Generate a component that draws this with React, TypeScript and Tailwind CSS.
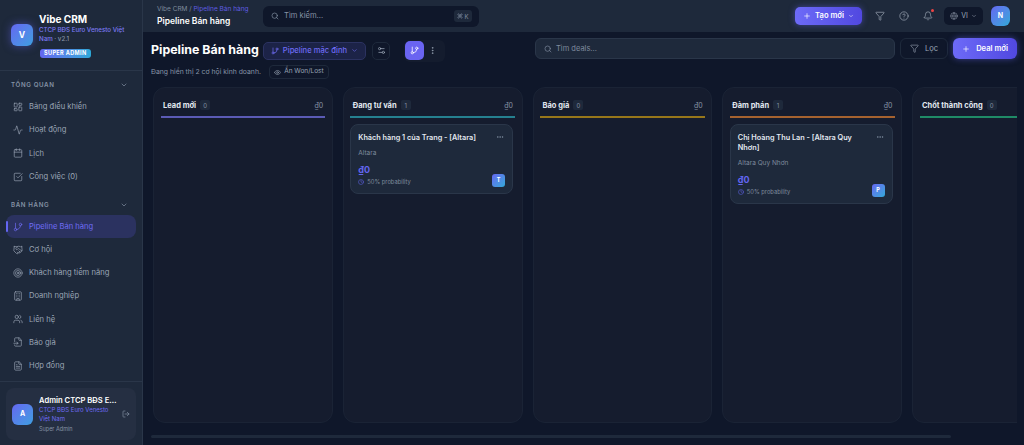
import {
  Bell,
  Building,
  Calendar,
  ChevronDown,
  CircleHelp,
  Clock,
  Ellipsis,
  EllipsisVertical,
  Eye,
  FileInput,
  FileText,
  Filter,
  GitBranch,
  Globe,
  Handshake,
  LayoutDashboard,
  LogOut,
  Plus,
  Search,
  Settings2,
  SquareCheckBig,
  Target,
  Users,
  Activity,
  Command,
} from "lucide-react";

const font = { fontFamily: "Inter, 'Noto Sans', sans-serif" };

const overview = [
  { label: "Bảng điều khiển", Icon: LayoutDashboard },
  { label: "Hoạt động", Icon: Activity },
  { label: "Lịch", Icon: Calendar },
  { label: "Công việc (0)", Icon: SquareCheckBig },
];

const sales = [
  { label: "Pipeline Bán hàng", Icon: GitBranch, active: true },
  { label: "Cơ hội", Icon: Handshake },
  { label: "Khách hàng tiềm năng", Icon: Target },
  { label: "Doanh nghiệp", Icon: Building },
  { label: "Liên hệ", Icon: Users },
  { label: "Báo giá", Icon: FileInput },
  { label: "Hợp đồng", Icon: FileText },
];

const stages = [
  {
    name: "Lead mới",
    count: 0,
    bar: "bg-[#5b5bb5]",
    deal: null,
  },
  {
    name: "Đang tư vấn",
    count: 1,
    bar: "bg-[#25808f]",
    deal: { title: "Khách hàng 1 của Trang - [Altara]", company: "Altara", avatar: "T" },
  },
  {
    name: "Báo giá",
    count: 0,
    bar: "bg-[#96761a]",
    deal: null,
  },
  {
    name: "Đàm phán",
    count: 1,
    bar: "bg-[#a5622f]",
    deal: { title: "Chị Hoàng Thu Lan - [Altara Quy Nhơn]", company: "Altara Quy Nhơn", avatar: "P" },
  },
  {
    name: "Chốt thành công",
    count: 0,
    bar: "bg-[#1f8a66]",
    deal: null,
  },
];

function NavItem({ label, Icon, active }: { label: string; Icon: typeof Plus; active?: boolean }) {
  return (
    <div
      className={`relative flex h-[23.2px] items-center gap-[6px] rounded-lg pl-[7px] text-[7.6px] ${
        active ? "bg-[#2b3260] text-[#6f6cf5]" : "text-[#9aa5b5]"
      }`}
    >
      {active && <span className="absolute left-0 top-[6px] h-[11px] w-[2px] rounded bg-[#6366f1]" />}
      <Icon size={10} strokeWidth={1.6} />
      <span>{label}</span>
    </div>
  );
}

function Section({ title, children }: { title: string; children: React.ReactNode }) {
  return (
    <div>
      <div className="flex h-[14px] items-center justify-between pl-[11px] pr-[14px] text-[6.2px] font-semibold tracking-[0.1em] text-[#8592a5]">
        <span>{title}</span>
        <ChevronDown size={8} />
      </div>
      <div className="mt-[3.4px] flex flex-col px-[6px]">{children}</div>
    </div>
  );
}

function Sidebar() {
  return (
    <aside className="flex h-[445px] w-[143px] shrink-0 flex-col border-r border-[#2a3649] bg-[#1e293b]">
      <div className="flex h-[71px] shrink-0 items-center gap-[6px] border-b border-[#2a3649] pl-[11px]">
        <div className="flex h-[22px] w-[22px] shrink-0 items-center justify-center rounded-md bg-gradient-to-br from-[#6366f1] to-[#3b9ee0] text-[8.5px] font-bold text-white shadow-[0_0_8px_rgba(99,102,241,0.5)]">
          V
        </div>
        <div className="w-[90px]">
          <div className="text-[10px] font-bold leading-[14px] text-white">Vibe CRM</div>
          <div className="text-[6.2px] font-medium leading-[8.5px] text-[#7d7bf5]">
            CTCP BĐS Euro Venesto Việt
            <br />
            Nam <span className="text-[#8592a5]">· v2.1</span>
          </div>
          <div className="ml-[1px] mt-[5.5px] w-fit rounded-[3px] bg-gradient-to-r from-[#6366f1] to-[#2ca8d8] px-[4px] text-[5.5px] font-bold leading-[9px] tracking-[0.07em] text-white">
            SUPER ADMIN
          </div>
        </div>
      </div>
      <div className="mt-[7px] flex-1">
        <Section title="TỔNG QUAN">
          {overview.map((item) => (
            <NavItem key={item.label} {...item} />
          ))}
        </Section>
        <div className="mt-[9.4px]">
          <Section title="BÁN HÀNG">
            {sales.map((item) => (
              <NavItem key={item.label} {...item} />
            ))}
          </Section>
        </div>
      </div>
      <div className="h-[64px] shrink-0 border-t border-[#2a3649] px-[6px] pt-[6px]">
        <div className="flex h-[52px] items-center gap-[6px] rounded-lg bg-[#252f42] pl-[6px]">
          <div className="flex h-[21px] w-[21px] shrink-0 items-center justify-center rounded-md bg-gradient-to-br from-[#6366f1] to-[#3b9ee0] text-[7px] font-bold text-white">
            A
          </div>
          <div className="w-[80px] shrink-0">
            <div className="truncate text-[7.6px] font-semibold leading-[11px] text-white">Admin CTCP BĐS Euro Venesto</div>
            <div className="text-[6px] leading-[8.5px] text-[#6f6cf5]">CTCP BĐS Euro Venesto Việt Nam</div>
            <div className="mt-[2px] text-[5.5px] leading-[8px] text-[#8592a5]">Super Admin</div>
          </div>
          <LogOut size={8} className="-ml-[3px] text-[#8592a5]" />
        </div>
      </div>
    </aside>
  );
}

function Header() {
  return (
    <header className="flex h-[32px] shrink-0 items-center bg-[#1e293b] pl-[14px] pr-[14px]">
      <div className="w-[106px]">
        <div className="text-[6.5px] leading-[9px] text-[#7f8b9e]">
          Vibe CRM / <span className="text-[#5f5ce0]">Pipeline Bán hàng</span>
        </div>
        <div className="mt-[2px] text-[8.5px] font-semibold leading-[11px] text-white">Pipeline Bán hàng</div>
      </div>
      <div className="flex h-[21px] w-[216px] items-center rounded-md bg-[#0f172a] pl-[8px] pr-[7px] text-[7.6px] text-[#8592a5]">
        <Search size={8} />
        <span className="ml-[5px] flex-1">Tìm kiếm...</span>
        <span className="flex h-[12px] w-[18px] items-center justify-center gap-[1px] rounded-[3px] bg-[#1e293b] text-[6px]">
          <Command size={6} />K
        </span>
      </div>
      <div className="ml-auto flex items-center">
        <button className="flex h-[18px] w-[67px] items-center justify-center gap-[4px] rounded-[5px] bg-gradient-to-r from-[#6d6af8] to-[#5148e0] text-[7.6px] font-semibold text-white shadow-[0_0_6px_rgba(99,102,241,0.5)]">
          <Plus size={8} />
          Tạo mới
          <ChevronDown size={6} />
        </button>
        <Filter size={10} strokeWidth={1.6} className="ml-[13px] text-[#a3adbb]" />
        <CircleHelp size={10} strokeWidth={1.6} className="ml-[14px] text-[#a3adbb]" />
        <span className="relative ml-[14px]">
          <Bell size={10} strokeWidth={1.6} className="text-[#a3adbb]" />
          <span className="absolute -right-[1px] -top-[2px] h-[3px] w-[3px] rounded-full bg-[#ef4444]" />
        </span>
        <div className="ml-[11px] flex h-[18px] w-[39px] items-center justify-center gap-[3px] rounded-[5px] bg-[#0f172a] text-[7px] text-[#9aa5b5]">
          <Globe size={8} strokeWidth={1.5} />
          VI
          <ChevronDown size={6} />
        </div>
        <div className="ml-[8px] flex h-[20px] w-[19px] items-center justify-center rounded-md bg-gradient-to-br from-[#6366f1] to-[#2ca8d8] text-[7px] font-bold text-white">
          N
        </div>
      </div>
    </header>
  );
}

function Toolbar() {
  return (
    <div className="flex h-[55px] shrink-0 items-start pl-[8px] pr-[7px] pt-[6px]">
      <div className="mt-[2px]">
        <div className="flex h-[21px] items-center">
          <h1 className="w-[107px] whitespace-nowrap text-[12.4px] font-bold text-white">Pipeline Bán hàng</h1>
          <div className="ml-[5px] flex h-[18px] w-[103px] items-center justify-center gap-[4px] rounded-[5px] border border-[#2b3260] bg-[#1c2347] text-[7.6px] font-medium text-[#6f6cf5]">
            <GitBranch size={8} />
            Pipeline mặc định
            <ChevronDown size={7} />
          </div>
          <div className="ml-[6px] flex h-[18px] w-[18px] items-center justify-center rounded-[5px] border border-[#1e293b]">
            <Settings2 size={9} className="text-[#9aa5b5]" />
          </div>
          <div className="ml-[14px] flex h-[22px] w-[41px] items-center rounded-[6px] bg-[#141c2e] pl-[1px]">
            <div className="flex h-[19px] w-[19px] items-center justify-center rounded-[5px] bg-[#6a64f1]">
              <GitBranch size={9} className="text-white" />
            </div>
            <EllipsisVertical size={9} className="ml-[4px] text-[#9aa5b5]" />
          </div>
        </div>
        <div className="mt-[4px] flex h-[14px] items-center">
          <span className="text-[6.85px] text-[#8592a5]">Đang hiển thị 2 cơ hội kinh doanh.</span>
          <div className="ml-[8px] flex h-[14px] w-[60px] items-center justify-center gap-[3px] rounded-[4px] border border-[#1e293b] text-[6.5px] text-[#9aa5b5]">
            <Eye size={7} />
            Ẩn Won/Lost
          </div>
        </div>
      </div>
      <div className="ml-auto flex items-center">
        <div className="flex h-[21px] w-[360px] items-center rounded-md border border-[#2a3649] bg-[#1e293b] pl-[8px] text-[7.5px] text-[#7f8b9e]">
          <Search size={8} />
          <span className="ml-[4px]">Tìm deals...</span>
        </div>
        <div className="ml-[5px] flex h-[21px] w-[48px] items-center justify-center gap-[6px] rounded-md border border-[#1e293b] text-[7.6px] text-[#9aa5b5]">
          <Filter size={9} strokeWidth={1.6} />
          Lọc
        </div>
        <button className="ml-[5px] flex h-[21px] w-[64px] items-center justify-center gap-[6px] rounded-md bg-gradient-to-r from-[#6d6af8] to-[#5148e0] text-[7.6px] font-semibold text-white shadow-[0_0_6px_rgba(99,102,241,0.5)]">
          <Plus size={8} />
          Deal mới
        </button>
      </div>
    </div>
  );
}

function DealCard({ title, company, avatar }: { title: string; company: string; avatar: string }) {
  return (
    <div className="relative rounded-lg border border-[#2a3649] bg-[#1e293b] pb-[7px] pl-[7px] pr-[8px] pt-[8px]">
      <Ellipsis size={8} className="absolute right-[8px] top-[8px] text-[#8592a5]" />
      <div className="pr-[14px] text-[7.3px] font-semibold leading-[10px] text-[#e2e8f0]">{title}</div>
      <div className="mt-[6px] text-[6.5px] leading-[9px] text-[#7f8b9e]">{company}</div>
      <div className="mt-[6px] text-[9px] font-bold leading-[12px] text-[#6366f1]">₫0</div>
      <div className="mt-[1px] flex items-center gap-[3px] text-[5.8px] leading-[9px] text-[#7f8b9e]">
        <Clock size={6} className="text-[#6366f1]" />
        50% probability
      </div>
      <div className="absolute bottom-[6px] right-[7px] flex h-[13px] w-[13px] items-center justify-center rounded-[3px] bg-gradient-to-br from-[#6366f1] to-[#2ca8d8] text-[5.5px] font-bold text-white">
        {avatar}
      </div>
    </div>
  );
}

function Column({ stage }: { stage: (typeof stages)[number] }) {
  return (
    <div className="h-[336px] w-[179.75px] shrink-0 rounded-xl border border-[#1a2335] bg-[#151c2e] pl-[6.5px] pr-[6.5px]">
      <div className="flex h-[24px] items-end justify-between pb-[1px] pl-[2.5px] pr-[2px]">
        <div className="flex items-center gap-[4px]">
          <span className="text-[7.5px] font-bold text-[#e2e8f0]">{stage.name}</span>
          <span className="flex h-[10px] min-w-[10px] items-center justify-center rounded-[2px] bg-[#1e293b] px-[2px] text-[6px] text-[#8592a5]">
            {stage.count}
          </span>
        </div>
        <span className="text-[7px] text-[#8592a5]">₫0</span>
      </div>
      <div className={`mt-[4px] h-[2px] ${stage.bar}`} />
      {stage.deal && (
        <div className="mr-[2px] mt-[6px]">
          <DealCard {...stage.deal} />
        </div>
      )}
    </div>
  );
}

export default function App() {
  return (
    <div style={font} className="flex h-[445px] w-[1024px] overflow-hidden bg-[#0f172a]">
      <Sidebar />
      <main className="flex min-w-0 flex-1 flex-col">
        <Header />
        <Toolbar />
        <div className="mr-[7px] flex gap-[10px] overflow-hidden pl-[10px]">
          {stages.map((stage) => (
            <Column key={stage.name} stage={stage} />
          ))}
        </div>
        <div className="ml-[8px] mt-[12px] h-[3px] w-[800px] rounded bg-[#1e293b]" />
      </main>
    </div>
  );
}
